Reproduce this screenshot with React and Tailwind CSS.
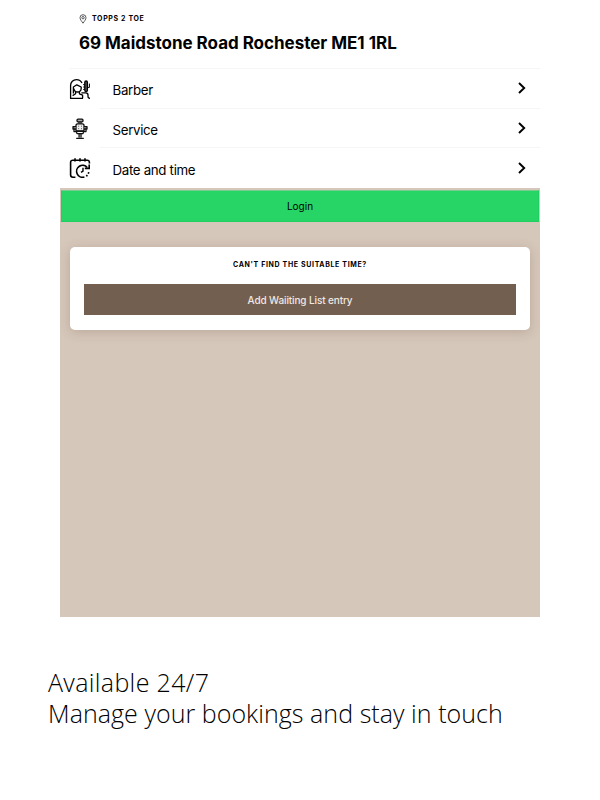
function PinIcon() {
  return (
    <svg width="8" height="10" viewBox="0 0 8 10" fill="none" stroke="#333" strokeWidth="0.8">
      <path d="M4 9.2C2.6 7.2 1 5.4 1 3.7a3 3 0 0 1 6 0C7 5.4 5.4 7.2 4 9.2Z" />
      <circle cx="4" cy="3.7" r="1.2" />
    </svg>
  );
}

function BarberIcon() {
  return (
    <svg width="22" height="22" viewBox="0 0 22 22" fill="none" stroke="#000" strokeWidth="1.3" strokeLinejoin="round">
      <path d="M1.6 20.2V7.4A5.8 5.8 0 0 1 7.4 1.6c2.6 0 4.6 1.2 5.6 3.4" />
      <path d="M4.4 15.4V9l3.4-2.2L12.2 9v1.4a3.6 3.6 0 0 1-3.6 3.6c-2 0-3.4-1.6-3.8-3.4" />
      <path d="M6.6 13.6v2.2l-3 1.8M10.4 13.8v2l3.2 1.4v3M1 20.3h13" />
      <rect x="15.8" y="3" width="2.6" height="10.6" rx="1.3" fill="#555" />
      <path d="M14.2 6.6h1.6M14.2 9h1.6M14.2 11.4h1.6M18.4 9.4h2V5.6" strokeWidth="1" />
      <path d="M12.4 14.8h4.4c1.4 0 2.2 1 2.2 2.2v1.6c0 1 .8 1.7 2 1.7" />
    </svg>
  );
}

function ChairIcon() {
  return (
    <svg width="16" height="22" viewBox="0 0 16 22" fill="none" stroke="#111" strokeWidth="1.3" strokeLinejoin="round">
      <rect x="5" y="1.2" width="6" height="2.6" rx="1" fill="#aaa" />
      <path d="M7 3.8v2M9 3.8v2" />
      <path d="M4 13V7l1-1.2h6l1 1.2v6Z" fill="#eee" />
      <path d="M6.3 8.2h.8M9 8.2h.8M6.3 10.7h.8M9 10.7h.8" strokeWidth="0.8" />
      <path d="M4 8.6H1V11h3M12 8.6h3V11h-3" fill="#999" />
      <path d="M2 11v2.6h2.4l.6 2h6l.6-2H14V11M4 13.4h8" />
      <path d="M7.1 15.6v4M9 15.6v4M4.2 20.3h7.6" />
    </svg>
  );
}

function CalendarIcon() {
  return (
    <svg width="22" height="22" viewBox="0 0 22 22" fill="none" stroke="#000" strokeWidth="1.6">
      <path d="M6.4 20.2H4a2.4 2.4 0 0 1-2.4-2.4V5.2A2 2 0 0 1 3.6 3.2h14.8a2 2 0 0 1 2 2v1.4" />
      <path d="M6 1.2v3.4M11 1.2v3.4M16 1.2v3.4" />
      <path d="M18.2 10.4A6 6 0 1 0 15.4 20" />
      <path d="M20.2 7.6v3.8h-4.4" />
      <path d="M14 10.8v3.4l-2 1.2" strokeWidth="1.4" />
      <path d="M17.2 19.2a6 6 0 0 0 2.6-5" strokeDasharray="1.6 1.6" />
    </svg>
  );
}

function Chevron() {
  return (
    <svg width="8" height="12" viewBox="0 0 8 12" fill="none" stroke="#000" strokeWidth="1.9">
      <path d="M1 1l5.2 5L1 11" />
    </svg>
  );
}

const rows = [
  { label: 'Barber', Icon: BarberIcon },
  { label: 'Service', Icon: ChairIcon },
  { label: 'Date and time', Icon: CalendarIcon },
];

function BookingRow({ label, Icon, first }) {
  return (
    <div className="flex h-[39.7px]">
      <div className={`ml-[9px] flex w-[31px] items-center border-t pr-[9px] ${first ? 'border-[#f6f6f6]' : 'border-transparent'}`}>
        <span className="flex w-[22px] shrink-0 justify-center pt-px">
          <Icon />
        </span>
      </div>
      <div className="flex flex-1 items-center justify-between border-t border-[#f6f6f6] pr-[14px] pl-[12.5px]">
        <span className="pt-[4px] text-[13.3px] leading-5 tracking-[-0.32px]">{label}</span>
        <Chevron />
      </div>
    </div>
  );
}

export default function App() {
  return (
    <div className="h-[800px] w-[600px] overflow-hidden bg-white font-['Inter',sans-serif] text-black">
      <div className="mx-[60px] flex h-[617px] flex-col">
        <header className="h-[68px] shrink-0 pt-[13px] pl-[19px]">
          <div className="flex h-[11px] items-center gap-[5px]">
            <PinIcon />
            <span className="pt-px text-[7px] font-bold tracking-[0.65px]">TOPPS 2 TOE</span>
          </div>
          <h1 className="mt-[7px] text-[17px] leading-6 font-bold tracking-[-0.02px] whitespace-nowrap">
            69 Maidstone Road Rochester ME1 1RL
          </h1>
        </header>

        <div className="h-[120px] shrink-0">
          {rows.map((row, i) => (
            <BookingRow key={row.label} {...row} first={i === 0} />
          ))}
        </div>

        <main className="flex-1 bg-[#d5c7ba] pt-[2px]">
          <button className="mx-px flex h-8 w-[478px] items-center justify-center border border-[#20cf62] border-t-[#77cd8d] bg-[#27d567] text-[10px]">
            Login
          </button>
          <section className="mx-[10px] mt-[25px] h-[83px] rounded-[5px] bg-white px-[14px] pt-3 shadow-[0_2px_12px_rgba(90,65,45,0.22)]">
            <h2 className="text-center text-[7px] leading-3 font-bold tracking-[0.65px]">CAN'T FIND THE SUITABLE TIME?</h2>
            <button className="mt-[13px] flex h-[31px] w-full items-center justify-center bg-[#735f4f] pt-px text-[10px] font-medium tracking-[-0.12px] text-[#eee8e3]">
              Add Waiiting List entry
            </button>
          </section>
        </main>
      </div>

      <div className="mt-[50px] ml-[48px] font-['Open_Sans',sans-serif] text-[25px] leading-[31px] font-light whitespace-nowrap">
        <p className="tracking-[0.35px]">Available 24/7</p>
        <p className="tracking-[0.05px]">Manage your bookings and stay in touch</p>
      </div>
    </div>
  );
}
